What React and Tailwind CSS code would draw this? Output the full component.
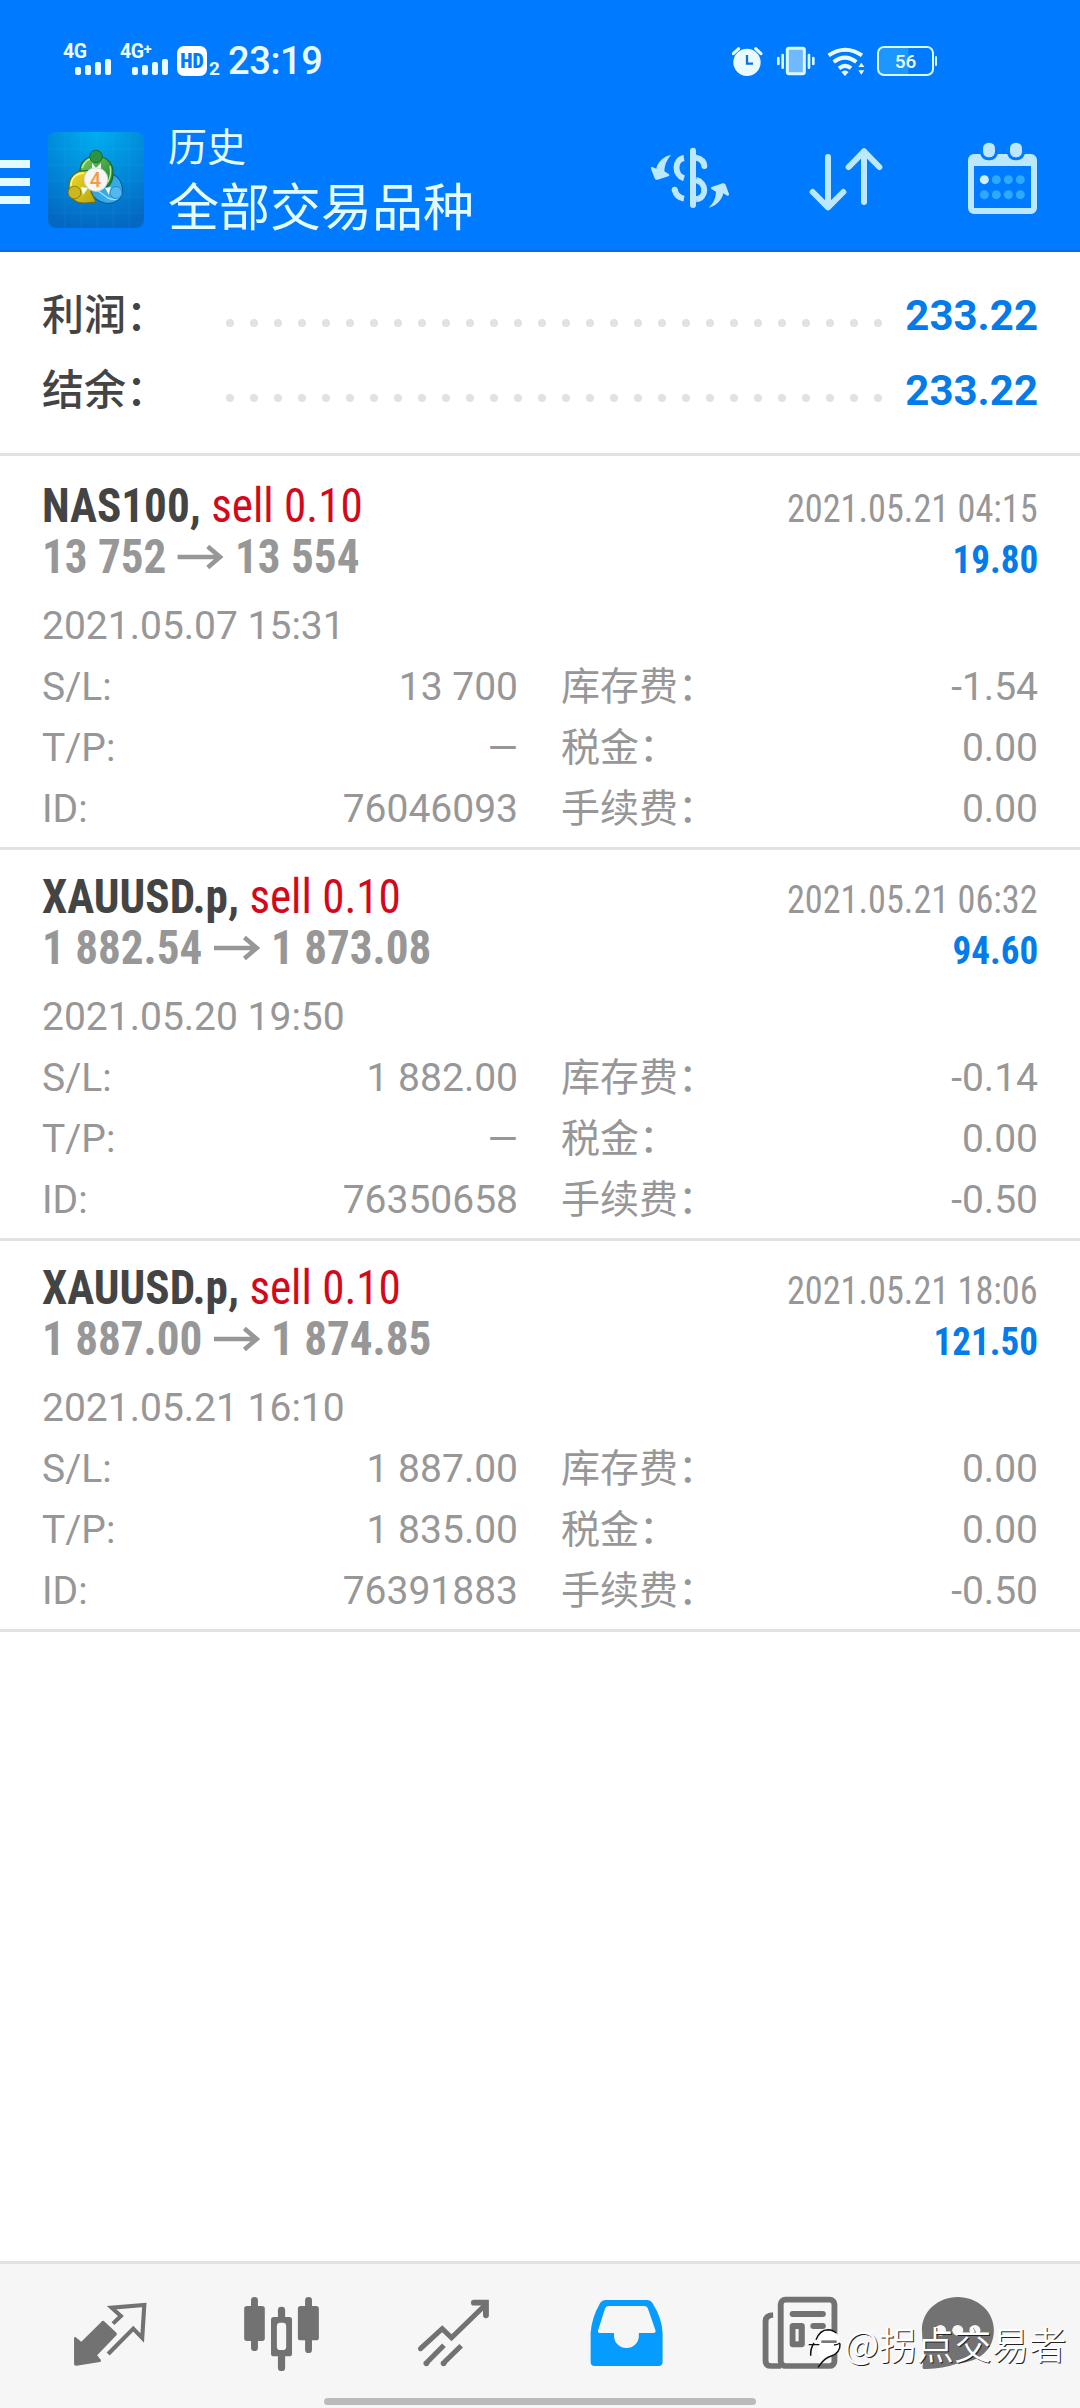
import React from 'react';

const ICON_GRAY = '#727272';
const ACTIVE_BLUE = '#069BFF';
const HEADER_ICON = '#BCE7FC';

const summary = [
  { label: '利润：', value: '233.22' },
  { label: '结余：', value: '233.22' },
];

const deals = [
  {
    id: '76046093',
    symbol: 'NAS100',
    side: 'sell 0.10',
    open: '13 752',
    close: '13 554',
    closeTime: '2021.05.21 04:15',
    profit: '19.80',
    openTime: '2021.05.07 15:31',
    sl: '13 700',
    tp: '—',
    swap: '-1.54',
    tax: '0.00',
    fee: '0.00',
  },
  {
    id: '76350658',
    symbol: 'XAUUSD.p',
    side: 'sell 0.10',
    open: '1 882.54',
    close: '1 873.08',
    closeTime: '2021.05.21 06:32',
    profit: '94.60',
    openTime: '2021.05.20 19:50',
    sl: '1 882.00',
    tp: '—',
    swap: '-0.14',
    tax: '0.00',
    fee: '-0.50',
  },
  {
    id: '76391883',
    symbol: 'XAUUSD.p',
    side: 'sell 0.10',
    open: '1 887.00',
    close: '1 874.85',
    closeTime: '2021.05.21 18:06',
    profit: '121.50',
    openTime: '2021.05.21 16:10',
    sl: '1 887.00',
    tp: '1 835.00',
    swap: '0.00',
    tax: '0.00',
    fee: '-0.50',
  },
];

const Signal = ({ label }) => (
  <div className="w-[48px] h-[32px]">
    <div className="h-[15px] text-[19.5px] leading-[16px] font-bold tracking-[-0.5px] whitespace-nowrap">
      {label}
    </div>
    <div className="flex items-end gap-[4px] h-[16px] pl-[12px]">
      <i className="w-[6px] h-[8px] rounded-[2px] bg-[#EAFBFF]" />
      <i className="w-[6px] h-[10px] rounded-[2px] bg-[#EAFBFF]" />
      <i className="w-[6px] h-[13px] rounded-[2px] bg-[#EAFBFF]" />
      <i className="w-[6px] h-[16px] rounded-[2px] bg-[#EAFBFF]" />
    </div>
  </div>
);

const StatusBar = () => (
  <div className="flex h-[110px] pt-[44px] pl-[63px] text-[#EAFBFF]">
    <Signal label="4G" />
    <div className="w-[9px]" />
    <Signal label={<>4G<sup className="text-[15px] -top-[4px]">+</sup></>} />
    <div className="ml-[9px] mt-[2px] w-[30px] h-[30px] rounded-[7px] bg-white text-[#007BFF] text-[20px] leading-[30px] text-center font-black font-['Roboto_Condensed',sans-serif]">
      HD
    </div>
    <div className="ml-[2px] w-[12px] mt-[16px] text-[19px] leading-[18px] font-bold">2</div>
    <div className="ml-[7px] w-[95px] text-[38px] leading-[38px] font-medium tracking-[-0.4px] whitespace-nowrap -mt-[2px]">23:19</div>

    <svg className="ml-[409px] mt-[2px]" width="32" height="32" viewBox="102 78 96 96">
      <circle cx="147" cy="127" r="41" fill="#EAFBFF" />
      <path d="M106 101l16-15M189 101l-16-15" stroke="#EAFBFF" strokeWidth="9" strokeLinecap="round" />
      <path d="M147 105v26h18" fill="none" stroke="#1272D8" strokeWidth="7" />
    </svg>
    <svg className="ml-[11px] mt-[2px]" width="42" height="32" viewBox="231 78 126 96">
      <rect x="268" y="85" width="51" height="76" rx="5" fill="#70B9FF" stroke="#D8F8FF" strokeWidth="9" />
      <path d="M254 105v38M241 114v18M333 105v38M346 114v18" stroke="#D8F8FF" strokeWidth="8" strokeLinecap="round" />
    </svg>
    <svg className="ml-[9px] mt-[2px]" width="40" height="32" viewBox="384 78 120 96">
      <path d="M392 106q50-34 100 0M407 126q34-26 68 0M423 145q19-15 36 0" fill="none" stroke="#EAFBFF" strokeWidth="12" />
      <path d="M430 156q11-9 22 0l-11 12zM481 141l9-13 9 13zM481 151l9 13 9-13z" fill="#EAFBFF" />
    </svg>
    <div className="ml-[11px] mt-[2px] flex items-center h-[30px]">
      <div className="w-[57px] h-[30px] rounded-[7px] border-[2px] border-[#D8F8FF] text-[19px] leading-[27px] text-center font-medium bg-linear-to-r from-[#1C97FF] from-55% to-[#007BFF] to-56%">
        56
      </div>
      <i className="ml-px w-[2px] h-[10px] rounded bg-[#D8F8FF]" />
    </div>
  </div>
);

const AppLogo = () => (
  <svg className="ml-[18px]" width="96" height="96" viewBox="0 0 96 96">
    <defs>
      <radialGradient id="tile" cx="50%" cy="0%" r="100%">
        <stop offset="0" stopColor="#00AEEF" />
        <stop offset="0.6" stopColor="#0284D6" />
        <stop offset="1" stopColor="#0468C2" />
      </radialGradient>
      <linearGradient id="green" x1="0" y1="0" x2="1" y2="1">
        <stop offset="0" stopColor="#7CCB5A" />
        <stop offset="1" stopColor="#1A8035" />
      </linearGradient>
      <linearGradient id="yellow" x1="0" y1="0" x2="1" y2="1">
        <stop offset="0" stopColor="#F0DC2C" />
        <stop offset="1" stopColor="#BBA410" />
      </linearGradient>
      <linearGradient id="blue" x1="0" y1="0" x2="1" y2="1">
        <stop offset="0" stopColor="#2C9CDF" />
        <stop offset="1" stopColor="#3FB4EC" />
      </linearGradient>
    </defs>
    <rect width="96" height="96" rx="8" fill="url(#tile)" />
    <path d="M17 0v96M33 0v96M49 0v96M65 0v96M81 0v96M0 17h96M0 33h96M0 49h96M0 65h96M0 81h96" stroke="#5CC4FF" strokeOpacity="0.1" />
    <path d="M43 44C39 53 42 68 57 71C68 73 77 65 74 54C72 45 65 41 58 41Z" fill="url(#blue)" stroke="#0A5D9D" strokeWidth="1.2" />
    <path d="M46 56L60 66Q70 70 73 62" fill="none" stroke="#9BE0FF" strokeWidth="1.4" />
    <path d="M44 39C31 35 21 44 21 54C20 66 28 72 38 71L48 70L43 60Z" fill="url(#yellow)" stroke="#66701C" strokeWidth="1.2" />
    <path d="M23 54Q23 42 36 41" fill="none" stroke="#FFF89A" strokeWidth="1.4" />
    <path d="M32 39C32 29 40 24 48 24C58 24 65 31 65 40C65 47 63 53 59 55L51 38Z" fill="url(#green)" stroke="#15692F" strokeWidth="1.2" />
    <path d="M34 36Q37 27 46 26M62 34Q64 42 60 50" fill="none" stroke="#B8EBA0" strokeWidth="1.4" />
    <path d="M44 31l4 5 5-5v8h-9zM33 55l7 1-5 7zM63 55l-6 1 4 7z" fill="#EFFFF0" />
    <circle cx="48" cy="24.5" r="6.3" fill="#2C9440" stroke="#126028" strokeWidth="0.8" />
    <circle cx="26.5" cy="60.5" r="6.3" fill="#CDB71C" stroke="#7B7312" strokeWidth="0.8" />
    <circle cx="68" cy="60.5" r="6" fill="#50B9F2" stroke="#1A7DBD" strokeWidth="0.8" />
    <circle cx="48" cy="47.5" r="11.8" fill="#F6F6F2" stroke="#D3D8D0" />
    <text x="47.5" y="55" fontSize="20" fontWeight="500" textAnchor="middle" fill="#F39A45" fontFamily="Roboto, sans-serif">4</text>
  </svg>
);

const Header = () => (
  <header className="h-[252px] bg-[#007BFF] border-b-2 border-[#0A6CDE]">
    <StatusBar />
    <div className="flex h-[140px]">
      <div className="w-[30px] pt-[50px] flex flex-col gap-[10px]">
        <i className="h-[8px] bg-[#E3FBFF]" />
        <i className="h-[8px] bg-[#E3FBFF]" />
        <i className="h-[8px] bg-[#E3FBFF]" />
      </div>
      <div className="pt-[22px]">
        <AppLogo />
      </div>
      <div className="ml-[24px] w-[480px] pt-[14px] text-[#E3FBFF]">
        <div className="text-[39px] leading-[48px]">历史</div>
        <div className="text-[51px] leading-[73px]">全部交易品种</div>
      </div>
      <div className="flex gap-[72px] pt-[30px]">
        <svg width="84" height="80" viewBox="84 90 252 240">
          <rect x="210" y="113" width="18" height="181" rx="9" fill={HEADER_ICON} />
          <g fill="none" stroke={HEADER_ICON} strokeWidth="18">
            <path d="M192 144C163 148 161 195 192 205" />
            <path d="M228 143Q251 148 253 168" strokeLinecap="round" />
            <path d="M228 210C261 218 261 264 228 268" />
            <path d="M164 239Q169 262 192 266" />
          </g>
          <circle cx="164" cy="239" r="9" fill={HEADER_ICON} />
          <path d="M153 135C133 138 113 155 109 176L97 171Q92 170 93 176L104 205Q106 211 113 209L145 199Q151 196 146 192L133 184C134 162 142 148 153 135Z" fill={HEADER_ICON} />
          <path d="M266 293C288 288 305 272 310 250L322 257Q328 259 327 252L317 224Q314 218 308 220L275 231Q270 234 275 238L288 245C287 265 280 280 266 293Z" fill={HEADER_ICON} />
        </svg>
        <svg width="84" height="80" viewBox="552 90 252 240">
          <g fill="none" stroke={HEADER_ICON} strokeWidth="18" strokeLinecap="round" strokeLinejoin="round">
            <path d="M624 141V292M578 246L624 292L670 246" />
            <path d="M732 276V124M686 171L732 124L778 171" />
          </g>
        </svg>
        <svg width="84" height="80" viewBox="1020 90 252 240">
          <rect x="1053" y="141" width="189" height="162" rx="9" fill="none" stroke={HEADER_ICON} strokeWidth="18" />
          <path d="M1053 141h189v27h-189z" fill={HEADER_ICON} />
          <path d="M1062 184Q1062 168 1078 168H1217Q1233 168 1233 184V278Q1233 294 1217 294H1078Q1062 294 1062 278Z" fill="#007BFF" />
          <rect x="1080" y="89" width="54" height="62" rx="25" fill="#007BFF" />
          <rect x="1161" y="89" width="54" height="62" rx="25" fill="#007BFF" />
          <rect x="1089" y="98" width="36" height="44" rx="17" fill={HEADER_ICON} />
          <rect x="1170" y="98" width="36" height="44" rx="17" fill={HEADER_ICON} />
          <g fill="#2FA9FF">
            <circle cx="1129" cy="209" r="13.5" />
            <circle cx="1165" cy="209" r="13.5" />
            <circle cx="1201" cy="209" r="13.5" />
            <circle cx="1093" cy="254" r="13.5" />
            <circle cx="1129" cy="254" r="13.5" />
            <circle cx="1165" cy="254" r="13.5" />
            <circle cx="1201" cy="254" r="13.5" />
          </g>
          <circle cx="1093" cy="209" r="13.5" fill="#CDF0FC" />
        </svg>
      </div>
    </div>
  </header>
);

const SummaryRow = ({ label, value }) => (
  <div className="flex items-center h-[75px] px-[42px]">
    <div className="w-[184px] pb-[7px] text-[42px] font-medium leading-[68px] text-[#444] font-['Noto_Sans_CJK_SC',sans-serif]">{label}</div>
    <div className="flex gap-[16px] pt-[15px]">
      {Array.from({ length: 28 }, (_, i) => (
        <i key={i} className="w-[8px] h-[8px] rounded-full bg-[#E2E2E2]" />
      ))}
    </div>
    <div className="flex-1 text-right text-[42px] font-bold leading-[75px] text-[#047BEA]">{value}</div>
  </div>
);

const Field = ({ name, value }) => (
  <div className="flex justify-between h-[61px] leading-[61px]">
    <span>{name}</span>
    <span>{value}</span>
  </div>
);

const Deal = ({ deal }) => (
  <section className="h-[391px] border-b-[3px] border-[#E2E2E2] pt-[21px] px-[42px] text-[39px] text-[#979797]">
    <div className="flex justify-between items-baseline h-[51px] leading-[51px] font-['Roboto_Condensed',sans-serif]">
      <div className="text-[48px] origin-left scale-x-[0.94]">
        <span className="font-bold text-[#444]">{deal.symbol}, </span>
        <span className="text-[#D4081A]">{deal.side}</span>
      </div>
      <div className="origin-right scale-x-[0.93]">{deal.closeTime}</div>
    </div>
    <div className="flex justify-between items-baseline h-[51px] leading-[51px] font-bold font-['Roboto_Condensed',sans-serif]">
      <div className="flex text-[48px] origin-left scale-x-[0.94]">
        <span>{deal.open}</span>
        <svg className="ml-[12px] mr-[12px] mt-[14px]" width="49" height="24" viewBox="0 0 47 24" preserveAspectRatio="none">
          <path d="M0 12H43M31 1.5L43.5 12L31 22.5" fill="none" stroke="#979797" strokeWidth="4.6" />
        </svg>
        <span>{deal.close}</span>
      </div>
      <div className="text-[#047BEA] origin-right scale-x-[0.95]">{deal.profit}</div>
    </div>
    <div className="mt-[14px] h-[61px] leading-[61px]">{deal.openTime}</div>
    <div className="grid grid-cols-[476px_1fr] gap-x-[43px]">
      <Field name="S/L:" value={deal.sl} />
      <Field name="库存费：" value={deal.swap} />
      <Field name="T/P:" value={deal.tp} />
      <Field name="税金：" value={deal.tax} />
      <Field name="ID:" value={deal.id} />
      <Field name="手续费：" value={deal.fee} />
    </div>
  </section>
);

const NavIcon = ({ x, className = '', children }) => (
  <svg className={`shrink-0 ${className}`} width="100" height="80" viewBox={`${x} 126 290.4 240`} preserveAspectRatio="none">
    {children}
  </svg>
);

const BottomNav = () => (
  <nav className="h-[147px] border-t-[3px] border-[#E2E2E2] bg-[#F6F6F6]">
    <div className="flex gap-[72px] pl-[60px] pt-[28px] h-[134px]">
      <NavIcon x={174.2}>
        <path d="M294 215Q299 210 304 215L338 248Q341 252 338 256L282 316L293 330Q295 334 290 336L222 347Q215 348 215 341V264Q216 259 220 262L236 275L294 216Z" fill={ICON_GRAY} />
        <path d="M328 221L351 198L324 173L419 165L413 264L387 236L314 312" fill="none" stroke={ICON_GRAY} strokeWidth="12" strokeLinejoin="miter" />
      </NavIcon>
      <NavIcon x={673.7}>
        <g fill={ICON_GRAY}>
          <rect x="709" y="168" width="60" height="105" rx="8" />
          <rect x="729" y="141" width="20" height="162" rx="10" />
          <rect x="865" y="168" width="61" height="103" rx="8" />
          <rect x="886" y="141" width="20" height="168" rx="10" />
          <rect x="787" y="201" width="61" height="118" rx="8" />
          <rect x="807" y="170" width="21" height="193" rx="10" />
        </g>
        <rect x="804" y="218" width="27" height="82" rx="10" fill="#F6F6F6" />
      </NavIcon>
      <NavIcon x={1173}>
        <g fill="none" stroke={ICON_GRAY} strokeWidth="15">
          <path d="M1221 296L1284 236L1311 263L1408 166" strokeLinecap="round" />
          <path d="M1376 158H1411V196" strokeWidth="17" strokeLinecap="round" />
          <path d="M1289 286L1240 337M1339 287L1290 337" />
        </g>
        <circle cx="1238" cy="340" r="8.5" fill={ICON_GRAY} />
        <circle cx="1288" cy="340" r="8.5" fill={ICON_GRAY} />
      </NavIcon>
      <NavIcon x={104.5}>
        <path d="M190 150H312Q321 150 326 158Q355 205 356 250V336Q356 348 344 348H159Q147 348 147 336V250Q149 205 175 158Q180 150 190 150Z" fill={ACTIVE_BLUE} />
        <path d="M199 168H303Q310 168 313 175L335 240Q338 248 329 249H287V258A36 36 0 0 1 215 258V249H174Q166 248 169 240L189 175Q192 168 199 168Z" fill="#F6F6F6" />
      </NavIcon>
      <NavIcon x={604}>
        <path d="M677 195Q655 196 655 214V332Q655 348 672 348H700" fill="none" stroke={ICON_GRAY} strokeWidth="17" />
        <rect x="699" y="149" width="156" height="199" rx="14" fill="none" stroke={ICON_GRAY} strokeWidth="17" />
        <rect x="725" y="183" width="105" height="18" rx="9" fill={ICON_GRAY} />
        <rect x="725" y="219" width="44" height="73" rx="10" fill={ICON_GRAY} />
        <rect x="742" y="237" width="9" height="37" fill="#F6F6F6" />
        <rect x="785" y="219" width="45" height="18" rx="9" fill={ICON_GRAY} />
      </NavIcon>
      <NavIcon x={1068.6} className="-ml-[12px]">
        <path d="M1213 141C1270 141 1318 184 1318 240C1318 300 1275 335 1215 340Q1165 358 1117 357Q1110 357 1111 350L1116 300Q1109 270 1109 240C1109 184 1156 141 1213 141Z" fill={ICON_GRAY} />
        <circle cx="1163" cy="241" r="16" fill="#F6F6F6" />
        <circle cx="1213" cy="241" r="16" fill="#F6F6F6" />
        <circle cx="1263" cy="241" r="16" fill="#F6F6F6" />
      </NavIcon>
    </div>
    <div className="mx-auto w-[432px] h-[7px] rounded-full bg-[#BBBBBB]" />
  </nav>
);

// sits on top of the tab bar
const Watermark = () => (
  <div className="absolute left-[808px] top-[2316px] flex items-center h-[54px] whitespace-nowrap">
    <svg className="mt-[10px]" width="36" height="42" viewBox="204 150 108 126">
      <path d="M234 204Q234 160 266 160Q294 162 299 190Q303 232 266 238L238 262L242 244Q228 230 234 202Z" fill="#fff" />
      <path d="M228 188Q240 158 264 158Q280 159 288 168M300 200Q302 228 272 238Q254 242 234 271M222 198Q211 214 212 236" fill="none" stroke="#111" strokeWidth="4.5" />
      <path d="M206 203H238M282 204Q292 204 300 198" fill="none" stroke="#111" strokeWidth="4" />
      <path d="M244 190h46v8h-46z" fill="#777" />
    </svg>
    <span className="text-[37.5px] leading-[54px] text-white [text-shadow:1px_1px_0_#222] font-['Noto_Sans_CJK_SC',sans-serif] font-[350]">
      @拐点交易者
    </span>
  </div>
);

const App = () => {
  return (
    <div className="relative w-[1080px] h-[2408px] flex flex-col overflow-hidden bg-white font-['Roboto','Noto_Sans_CJK_SC',sans-serif]">
      <Header />
      <div className="h-[204px] pt-[26px] border-b-[3px] border-[#E2E2E2]">
        {summary.map(row => (
          <SummaryRow key={row.label} label={row.label} value={row.value} />
        ))}
      </div>
      <main className="flex-1 pt-[3px]">
        {deals.map(deal => (
          <Deal key={deal.id} deal={deal} />
        ))}
      </main>
      <BottomNav />
      <Watermark />
    </div>
  );
};

export default App;
